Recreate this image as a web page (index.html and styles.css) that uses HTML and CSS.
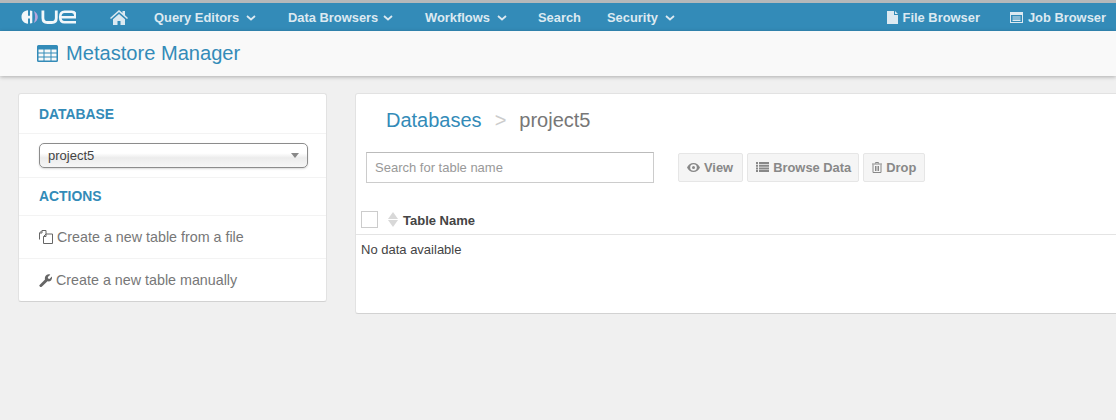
FILE: index.html
```html
<!DOCTYPE html>
<html lang="en">
<head>
<meta charset="utf-8">
<title>Metastore Manager</title>
<link rel="stylesheet" href="styles.css">
</head>
<body>
<nav class="navbar">
  <a class="logo" href="#" aria-label="Hue">
    <svg width="55" height="14" viewBox="0 0 55 14">
      <path d="M7 .3C3 .6.500 3.300.500 7S3 13.400 7 13.700V8.500h2v5.100c.9-.1 1.700-.3 2.300-.6V1c-.6-.3-1.400-.5-2.300-.6v5.400H7z" fill="#f2f7fa"/>
      <path d="M13 1c2.300 1.400 3.800 3.500 3.800 6s-1.500 4.600-3.800 6c.7-2 1.100-4 1.100-6s-.4-4-1.100-6z" fill="#b9a6dc"/>
      <path d="M21.900 .5v7.500c0 2.800 1.700 4.500 4.500 4.500h4.400c2.800 0 4.500-1.700 4.500-4.500V.5" fill="none" stroke="#f2f7fa" stroke-width="2.800"/>
      <path d="M55 12.300H43.500c-2.800 0-4.300-2-4.300-5.300S40.700 1.700 43.500 1.700h7.200c2.700 0 3.600 1.500 3.600 3.800v1.700H39.500" fill="none" stroke="#f2f7fa" stroke-width="2.600"/>
    </svg>
  </a>
  <a class="home" href="#" aria-label="Home">
    <svg width="18" height="15" viewBox="0 0 18 15"><path d="M9 0l3.500 3V1h2.500v4.200L18 8l-1 1-8-7-8 7-1-1zM3 9.300L9 4l6 5.300V15h-4.500v-4h-3v4H3z" fill="#dce9f1"/></svg>
  </a>
  <a class="nav-item nav-query" href="#">Query Editors<svg class="chev" width="10" height="6" viewBox="0 0 10 6"><path d="M1 1l4 3.500L9 1" fill="none" stroke="#dce9f1" stroke-width="1.800"/></svg></a>
  <a class="nav-item nav-data" href="#">Data Browsers<svg class="chev" width="10" height="6" viewBox="0 0 10 6"><path d="M1 1l4 3.500L9 1" fill="none" stroke="#dce9f1" stroke-width="1.800"/></svg></a>
  <a class="nav-item nav-work" href="#">Workflows<svg class="chev" width="10" height="6" viewBox="0 0 10 6"><path d="M1 1l4 3.500L9 1" fill="none" stroke="#dce9f1" stroke-width="1.800"/></svg></a>
  <a class="nav-item nav-search" href="#">Search</a>
  <a class="nav-item" href="#">Security<svg class="chev" width="10" height="6" viewBox="0 0 10 6"><path d="M1 1l4 3.500L9 1" fill="none" stroke="#dce9f1" stroke-width="1.800"/></svg></a>
  <span class="nav-spacer"></span>
  <a class="nav-item nav-file" href="#"><svg width="11" height="13" viewBox="0 0 11 13"><path d="M0 0h7v4h4v9H0zM8 0l3 3H8z" fill="#dce9f1"/></svg>File Browser</a>
  <a class="nav-item nav-job" href="#"><svg width="13" height="11" viewBox="0 0 13 11"><path d="M0 0h13v11H0zM1 3v7h11V3zM2.500 4.500h8v1h-8zM2.500 6.500h8v1h-8zM2.500 8h8v1h-8z" fill="#dce9f1" fill-rule="evenodd"/></svg>Job Browser</a>
</nav>
<header class="subheader">
  <svg class="grid-icon" width="21" height="17" viewBox="0 0 21 17"><path d="M1.500 0h18A1.500 1.500 0 0 1 21 1.500v14a1.500 1.500 0 0 1-1.500 1.500h-18A1.500 1.500 0 0 1 0 15.500v-14A1.500 1.500 0 0 1 1.500 0zM1.500 4.500V7.500h5V4.500zM7.500 4.500V7.500h6V4.500zM14.500 4.500V7.500h5V4.500zM1.500 8.500v3h5v-3zM7.500 8.500v3h6v-3zM14.500 8.500v3h5v-3zM1.500 12.500v3h5v-3zM7.500 12.500v3h6v-3zM14.500 12.500v3h5v-3z" fill="#338bb8" fill-rule="evenodd"/></svg>
  <h1>Metastore Manager</h1>
</header>
<main class="layout">
  <aside class="card side">
    <h2 class="side-head">DATABASE</h2>
    <div class="side-select">
      <div class="select"><span>project5</span><i class="caret"></i></div>
    </div>
    <h2 class="side-head side-actions">ACTIONS</h2>
    <a class="side-link side-link-file" href="#">
      <svg width="14" height="14" viewBox="0 0 14 14"><path d="M.5 9.500V3L3 .5h4V4M3 .7V3H.7M4.500 13.500V6.500L7 4h6.500v9.500zM7 4.200V6.500H4.700" fill="none" stroke="#666" stroke-width="1"/></svg>Create a new table from a file</a>
    <a class="side-link" href="#">
      <svg width="13" height="13" viewBox="0 0 13 13"><path d="M.6 10.900L6 5.500C5.400 3.300 6.500.6 9.500.3c.7 0 1.300.1 1.800.4L8.800 3.100l.3 1.500 1.400.3L12.800 2.500c.5 1.300.2 2.900-.8 3.900-1 1-2.300 1.200-3.500.9L3 12.600c-.6.6-1.400.6-1.900.1l-.5-.5c-.4-.4-.4-.9 0-1.300z" fill="#666"/></svg>Create a new table manually</a>
  </aside>
  <section class="card content">
    <div class="crumbs"><a href="#">Databases</a><span class="sep">&gt;</span><span class="cur">project5</span></div>
    <div class="toolbar">
      <input class="search" type="text" placeholder="Search for table name">
      <div class="btns">
        <a class="btn btn-view" href="#"><svg width="13" height="9" viewBox="0 0 13 9"><path d="M6.500 0C3.500 0 1.200 2 0 4.500 1.200 7 3.500 9 6.500 9S11.800 7 13 4.500C11.800 2 9.500 0 6.500 0zm0 1.200a3.300 3.300 0 1 1 0 6.600 3.300 3.300 0 0 1 0-6.600zM6.500 3a1.500 1.500 0 1 0 0 3 1.500 1.500 0 0 0 0-3z" fill="#888" fill-rule="evenodd"/></svg>View</a>
        <a class="btn btn-browse" href="#"><svg width="13" height="10" viewBox="0 0 13 10"><path d="M0 0h2v2H0zM3 0h10v2H3zM0 2.700h2v2H0zM3 2.700h10v2H3zM0 5.400h2v2H0zM3 5.400h10v2H3zM0 8h2v2H0zM3 8h10v2H3z" fill="#888"/></svg>Browse Data</a>
        <a class="btn" href="#"><svg width="10" height="11" viewBox="0 0 10 11"><path d="M3.500 1.500V.5h3v1M0 2h10M1 2.500v8h8v-8M3.500 4v5M5 4v5M6.500 4v5" fill="none" stroke="#888" stroke-width="1"/></svg>Drop</a>
      </div>
    </div>
    <div class="thead">
      <span class="check"></span>
      <span class="sort"><i class="up"></i><i class="down"></i></span>
      <span class="th">Table Name</span>
    </div>
    <div class="empty">No data available</div>
  </section>
</main>
</body>
</html>
```
FILE: styles.css
```css
* { box-sizing: border-box; }
html, body { margin: 0; padding: 0; height: 100%; overflow: hidden; }
body {
  background: #f0f0f0;
  font-family: "Liberation Sans", Arial, sans-serif;
  font-size: 13px;
  color: #444;
  border-top: 3px solid #b5b8ba;
}
a { text-decoration: none; color: inherit; }

.navbar {
  display: flex;
  align-items: center;
  height: 28px;
  background: #338bb8;
  color: #dce9f1;
  font-weight: bold;
  font-size: 12.9px;
  white-space: nowrap;
}
.logo { display: flex; margin-left: 21px; width: 89px; }
.home { display: flex; width: 44px; }
.nav-item { display: flex; align-items: center; }
.chev { margin-left: 7px; margin-top: 1px; }
.nav-query { width: 134px; }
.nav-data { width: 137px; }
.nav-data .chev { margin-left: 5px; }
.nav-work { width: 113px; }
.nav-search { width: 69px; }
.nav-spacer { flex: 1; }
.nav-file svg { margin-right: 5px; }
.nav-file { margin-right: 30px; }
.nav-job svg { margin-right: 5px; }
.nav-job { margin-right: 10px; }

.subheader {
  display: flex;
  align-items: center;
  height: 45px;
  padding-left: 37px;
  background: #f9f9f9;
  box-shadow: 0 1px 4px rgba(0, 0, 0, .28);
}
.grid-icon { margin-right: 8px; margin-top: -1px; }
.subheader h1 {
  margin: 0;
  font-size: 20.1px;
  font-weight: normal;
  color: #338bb8;
}

.layout {
  display: grid;
  grid-template-columns: 309px 800px;
  column-gap: 28px;
  align-items: start;
  padding: 17px 0 0 18px;
}
.card {
  background: #fff;
  border: 1px solid #e2e2e2;
  border-bottom-color: #d2d2d2;
  border-radius: 3px;
}

.side { height: 209px; }
.side-head {
  margin: 0;
  height: 39px;
  line-height: 40px;
  padding-left: 20px;
  font-size: 13.9px;
  font-weight: bold;
  color: #338bb8;
}
.side-select {
  height: 45px;
  padding: 9px 18px 0 20px;
  border-top: 1px solid #f3f3f3;
  border-bottom: 1px solid #f3f3f3;
}
.select {
  display: flex;
  align-items: center;
  justify-content: space-between;
  height: 25px;
  padding: 0 8px;
  border: 1px solid #8c8c8c;
  border-radius: 5px;
  background: linear-gradient(#fff 40%, #ececec 60%, #f6f6f6);
  box-shadow: 0 1px 2px rgba(0, 0, 0, .15);
  font-size: 13px;
  color: #444;
}
.caret {
  width: 0;
  height: 0;
  border-left: 4px solid transparent;
  border-right: 4px solid transparent;
  border-top: 5px solid #888;
}
.side-actions { height: 37px; line-height: 36px; }
.side-link {
  display: flex;
  align-items: center;
  height: 43px;
  padding-left: 20px;
  border-top: 1px solid #f3f3f3;
  font-size: 14.3px;
  color: #777;
}
.side-link svg { margin-right: 4px; }
.side-link-file svg { margin-right: 4px; }

.content { height: 221px; }
.crumbs {
  display: flex;
  align-items: center;
  height: 52px;
  padding-left: 30px;
  font-size: 20px;
  color: #777;
}
.crumbs a { color: #338bb8; }
.sep { margin: 0 13px; color: #ccc; }
.toolbar {
  display: flex;
  align-items: center;
  padding-left: 10px;
  height: 32px;
  margin-top: 5px;
}
.search {
  width: 288px;
  height: 31px;
  padding: 0 8px;
  border: 1px solid #ccc;
  border-top-color: #bbb;
  background: #fff;
  font: 13px "Liberation Sans", Arial, sans-serif;
  color: #444;
  outline: none;
}
.search::placeholder { color: #999; opacity: 1; }
.btns { display: flex; gap: 4px; margin-left: 24px; }
.btn {
  display: flex;
  align-items: center;
  gap: 4px;
  height: 29px;
  padding: 0 8px;
  background: #f5f5f5;
  border: 1px solid #e6e6e6;
  border-radius: 2px;
  font-weight: bold;
  font-size: 12.9px;
  color: #888;
}
.btn-view { padding-right: 9px; }
.btn-browse { padding-right: 7px; }
.thead {
  display: flex;
  align-items: center;
  height: 30px;
  margin-top: 22px;
  padding-left: 5px;
  border-bottom: 1px solid #e4e4e4;
}
.check {
  width: 17px;
  height: 17px;
  border: 1px solid #ccc;
  background: #fff;
}
.sort {
  display: flex;
  flex-direction: column;
  gap: 1px;
  margin: 0 5px 0 10px;
}
.up, .down {
  width: 0;
  height: 0;
  border-left: 5px solid transparent;
  border-right: 5px solid transparent;
}
.up { border-bottom: 7px solid #d8d8d8; }
.down { border-top: 7px solid #d8d8d8; }
.th { margin-top: 2px; font-weight: bold; color: #444; }
.empty { padding: 7px 0 0 5px; line-height: 16px; color: #444; }
```
